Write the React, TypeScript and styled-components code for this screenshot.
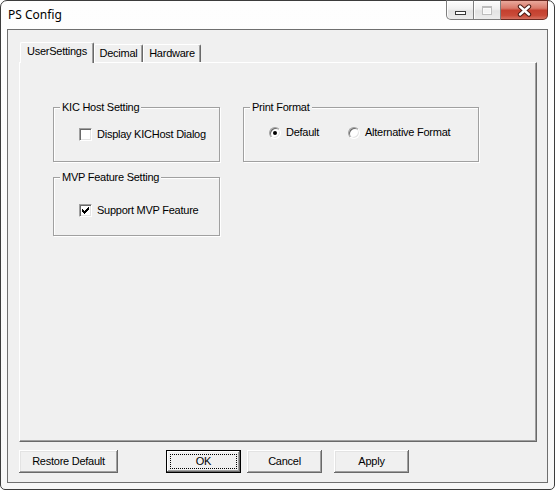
import React from "react";
import styled, { createGlobalStyle, css } from "styled-components";

const Global = createGlobalStyle`
  html, body { margin: 0; padding: 0; background: #ffffff; width: 555px; height: 490px; overflow: hidden; }
  #root { width: 555px; height: 490px; }
  *, *::before, *::after { box-sizing: border-box; }
`;

const Window = styled.div`
  width: 555px;
  height: 490px;
  border: 1px solid #3c3c3c;
  border-radius: 7px 7px 5px 5px;
  background: linear-gradient(#fefefe, #f7f7f7);
  padding: 0 6px 6px 6px;
  display: flex;
  flex-direction: column;
  font-family: "Liberation Sans", Arial, sans-serif;
  font-size: 11px;
  letter-spacing: -0.25px;
  color: #000;
`;

const TitleBar = styled.div`
  height: 28px;
  display: flex;
  justify-content: space-between;
  align-items: flex-start;
`;

const TitleText = styled.div`
  font-family: "Noto Sans", "Open Sans", sans-serif;
  font-size: 12px;
  letter-spacing: 0;
  line-height: 16px;
  margin-top: 6px;
  padding-left: 1px;
  color: #000;
`;

const CaptionGroup = styled.div`
  display: flex;
  margin-top: -1px;
`;

const CapBtn = styled.div<{ $w: number; $kind: "min" | "max" | "close" }>`
  width: ${(p) => p.$w}px;
  height: 20px;
  display: flex;
  align-items: center;
  justify-content: center;
  border: 1px solid #7e7e7e;
  border-top-color: #5a5a5a;
  ${(p) =>
    p.$kind === "close"
      ? css`
          background: linear-gradient(#e9a99c 0%, #d9796a 40%, #c4402f 52%, #c94a38 80%, #d77262 100%);
          border-color: #6b2a22;
          border-left: none;
          border-radius: 0 0 5px 0;
        `
      : css`
          background: linear-gradient(#fdfdfd 0%, #f0f0f0 45%, #e3e3e3 55%, #ececec 100%);
          box-shadow: inset 1px 1px 0 rgba(255, 255, 255, 0.9);
        `}
  ${(p) =>
    p.$kind === "min" &&
    css`
      border-radius: 0 0 0 5px;
    `}
  ${(p) =>
    p.$kind === "max" &&
    css`
      border-left: none;
    `}
`;

const MinGlyph = styled.span`
  width: 11px;
  height: 4px;
  margin-top: 5px;
  background: #fff;
  border: 1px solid #3a3a3a;
`;

const MaxGlyph = styled.span`
  width: 10px;
  height: 9px;
  border: 1px solid #bdbdbd;
  border-top-width: 2px;
  background: #f4f4f4;
  box-shadow: inset 0 0 0 1px #fbfbfb;
`;

const Client = styled.div`
  flex: 1;
  display: flex;
  flex-direction: column;
  border: 1px solid #6f6f6f;
  background: #f0f0f0;
  padding: 12px 10px 0 11px;
`;

const TabStrip = styled.div`
  height: 20px;
  display: flex;
  align-items: flex-end;
  padding-left: 1px;
`;

const Tab = styled.div<{ $active?: boolean; $w: number }>`
  position: relative;
  z-index: 1;
  width: ${(p) => p.$w}px;
  height: ${(p) => (p.$active ? 21 : 18)}px;
  margin-bottom: ${(p) => (p.$active ? -1 : 0)}px;
  padding-top: 2px;
  line-height: 13px;
  text-align: center;
  background: #f0f0f0;
  border-left: 1px solid #ffffff;
  border-top: 1px solid #ffffff;
  border-right: 1px solid #696969;
  border-radius: 2px 2px 0 0;
  box-shadow: inset -1px 0 0 #a0a0a0;
  white-space: nowrap;
`;

const Panel = styled.div`
  height: 380px;
  border-top: 1px solid #ffffff;
  border-left: 1px solid #ffffff;
  border-right: 1px solid #696969;
  border-bottom: 1px solid #696969;
  box-shadow: inset -1px -1px 0 #a0a0a0;
  padding: 44px 0 0 33px;
  display: grid;
  grid-template-columns: 167px 236px;
  column-gap: 23px;
  align-items: start;
`;

const Column = styled.div`
  display: flex;
  flex-direction: column;
  gap: 15px;
`;

const Group = styled.div<{ $h: number }>`
  height: ${(p) => p.$h}px;
  border: 1px solid #a0a0a0;
  box-shadow: 1px 1px 0 #ffffff, inset 1px 1px 0 #ffffff;
  display: flex;
  flex-direction: column;
  align-items: flex-start;
`;

const Caption = styled.div`
  margin: -7px 0 0 6px;
  padding: 0 2px;
  line-height: 13px;
  background: #f0f0f0;
  white-space: nowrap;
`;

const Options = styled.div<{ $top: number }>`
  margin-top: ${(p) => p.$top}px;
  padding-left: 25px;
  display: flex;
  align-items: center;
  height: 13px;
`;

const Option = styled.label<{ $w?: number }>`
  display: flex;
  align-items: center;
  gap: 5px;
  line-height: 13px;
  white-space: nowrap;
  ${(p) => p.$w && css`width: ${p.$w}px;`}
`;

const CheckBox = styled.span`
  width: 13px;
  height: 13px;
  flex: none;
  display: flex;
  align-items: center;
  justify-content: center;
  background: #fff;
  border: 1px solid;
  border-color: #a0a0a0 #ffffff #ffffff #a0a0a0;
  box-shadow: inset 1px 1px 0 #696969, inset -1px -1px 0 #e3e3e3;
`;

const Radio = styled.span<{ $on?: boolean }>`
  width: 12px;
  height: 12px;
  flex: none;
  border-radius: 50%;
  display: flex;
  align-items: center;
  justify-content: center;
  background: #fff;
  border: 1px solid;
  border-color: #a0a0a0 #ffffff #ffffff #a0a0a0;
  box-shadow: inset 1px 1px 0 #696969, inset -1px -1px 0 #e3e3e3;
  &::after {
    content: "";
    width: 4px;
    height: 4px;
    border-radius: 50%;
    background: ${(p) => (p.$on ? "#000" : "transparent")};
  }
`;

const ButtonRow = styled.div`
  margin-top: 8px;
  display: flex;
`;

const Btn = styled.div<{ $w: number; $ml?: number; $default?: boolean }>`
  width: ${(p) => p.$w}px;
  height: 23px;
  margin-left: ${(p) => p.$ml ?? 0}px;
  background: #f0f0f0;
  display: flex;
  align-items: stretch;
  justify-content: stretch;
  padding: ${(p) => (p.$default ? "3px 3px 3px 3px" : "0")};
  ${(p) =>
    p.$default
      ? css`
          border: 1px solid #000;
          box-shadow: inset -1px -1px 0 #696969, inset 1px 1px 0 #ffffff,
            inset -2px -2px 0 #a0a0a0;
        `
      : css`
          box-shadow: inset -1px -1px 0 #696969, inset 1px 1px 0 #ffffff,
            inset -2px -2px 0 #a0a0a0, inset 2px 2px 0 #e3e3e3;
        `}
`;

const BtnLabel = styled.span<{ $focus?: boolean }>`
  flex: 1;
  display: flex;
  align-items: center;
  justify-content: center;
  line-height: 13px;
  white-space: nowrap;
  border: 1px dotted ${(p) => (p.$focus ? "#000" : "transparent")};
`;

const CheckMark = () => (
  <svg width="7" height="7" viewBox="0 0 7 7" shapeRendering="crispEdges">
    <path
      fill="#000"
      d="M6 0h1v1h-1z M5 1h2v1h-2z M0 2h1v1h-1z M4 2h3v1h-3z M0 3h2v1h-2z M3 3h3v1h-3z M0 4h5v1h-5z M1 5h3v1h-3z M2 6h1v1h-1z"
    />
  </svg>
);

const CloseGlyph = () => (
  <svg width="15" height="13" viewBox="0 0 15 13">
    <path d="M3 2.5 L12 10.5 M12 2.5 L3 10.5" stroke="#4a1b14" strokeWidth="4.4" strokeLinecap="round" fill="none" />
    <path d="M3 2.5 L12 10.5 M12 2.5 L3 10.5" stroke="#ffffff" strokeWidth="2.4" strokeLinecap="round" fill="none" />
  </svg>
);

export default function App() {
  return (
    <>
      <Global />
      <Window>
        <TitleBar>
          <TitleText>PS Config</TitleText>
          <CaptionGroup>
            <CapBtn $w={28} $kind="min">
              <MinGlyph />
            </CapBtn>
            <CapBtn $w={27} $kind="max">
              <MaxGlyph />
            </CapBtn>
            <CapBtn $w={47} $kind="close">
              <CloseGlyph />
            </CapBtn>
          </CaptionGroup>
        </TitleBar>
        <Client>
          <TabStrip>
            <Tab $active $w={74}>UserSettings</Tab>
            <Tab $w={49}>Decimal</Tab>
            <Tab $w={58}>Hardware</Tab>
          </TabStrip>
          <Panel>
            <Column>
              <Group $h={55}>
                <Caption>KIC Host Setting</Caption>
                <Options $top={14}>
                  <Option>
                    <CheckBox />
                    Display KICHost Dialog
                  </Option>
                </Options>
              </Group>
              <Group $h={59}>
                <Caption>MVP Feature Setting</Caption>
                <Options $top={20}>
                  <Option>
                    <CheckBox>
                      <CheckMark />
                    </CheckBox>
                    Support MVP Feature
                  </Option>
                </Options>
              </Group>
            </Column>
            <Group $h={55}>
              <Caption>Print Format</Caption>
              <Options $top={12}>
                <Option $w={79}>
                  <Radio $on />
                  Default
                </Option>
                <Option>
                  <Radio />
                  Alternative Format
                </Option>
              </Options>
            </Group>
          </Panel>
          <ButtonRow>
            <Btn $w={99}>
              <BtnLabel>Restore Default</BtnLabel>
            </Btn>
            <Btn $w={75} $ml={48} $default>
              <BtnLabel $focus>OK</BtnLabel>
            </Btn>
            <Btn $w={75} $ml={6}>
              <BtnLabel>Cancel</BtnLabel>
            </Btn>
            <Btn $w={75} $ml={12}>
              <BtnLabel>Apply</BtnLabel>
            </Btn>
          </ButtonRow>
        </Client>
      </Window>
    </>
  );
}
